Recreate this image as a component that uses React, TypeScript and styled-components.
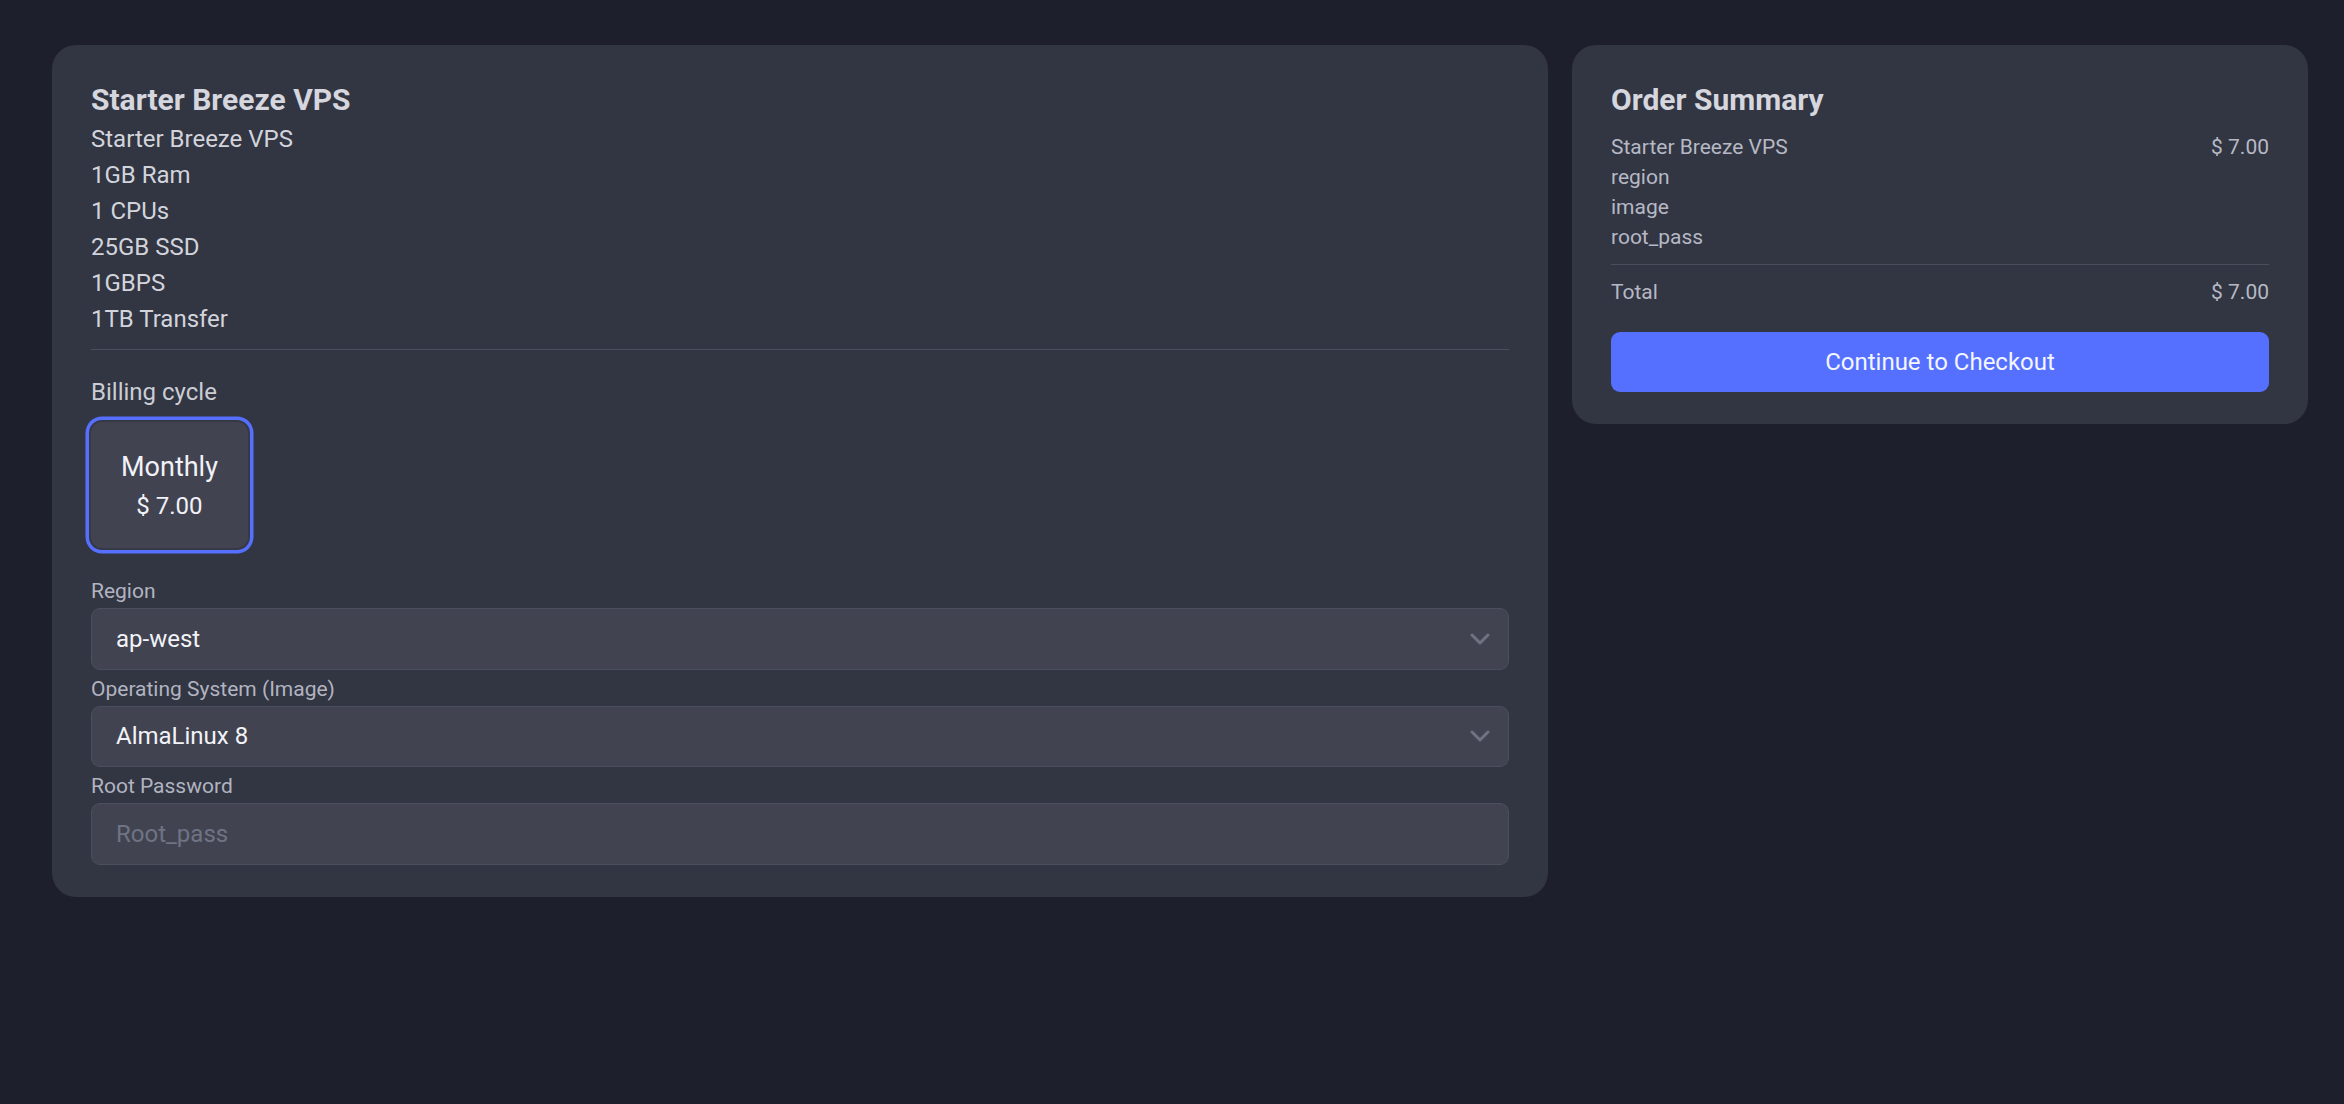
import React from "react";
import styled, { createGlobalStyle } from "styled-components";

const GlobalStyle = createGlobalStyle`
  html, body {
    margin: 0;
    padding: 0;
    background: #1e1f2c;
    font-family: Roboto, "Noto Sans", "Liberation Sans", sans-serif;
  }
  * { box-sizing: border-box; }
`;

const Page = styled.main`
  min-height: 1104px;
  padding: 45px 36px 0 52px;
  display: grid;
  grid-template-columns: repeat(3, 1fr);
  gap: 24px;
  align-items: start;
`;

const Card = styled.section<{ $span?: number }>`
  grid-column: span ${(p) => p.$span ?? 1};
  background: #323542;
  border-radius: 24px;
  padding: 34px 39px 32px;
  display: flex;
  flex-direction: column;
`;

const Title = styled.h2`
  margin: 0;
  font-size: 30px;
  line-height: 42px;
  font-weight: 700;
  color: #d5d6de;
`;

const SpecList = styled.div`
  display: flex;
  flex-direction: column;
  font-size: 24px;
  line-height: 36px;
  color: #d2d4dc;
`;

const Divider = styled.hr<{ $gap?: number }>`
  margin: ${(p) => p.$gap ?? 12}px 0 0;
  border: none;
  height: 1px;
  background: #4a4d5b;
`;

const SectionLabel = styled.div`
  margin-top: 24px;
  font-size: 24px;
  line-height: 36px;
  color: #cbcdd5;
`;

const CycleRow = styled.div`
  margin-top: 12px;
  display: flex;
  gap: 16px;
`;

const CycleOption = styled.button<{ $active?: boolean }>`
  display: flex;
  flex-direction: column;
  align-items: center;
  padding: 24px 30px;
  background: #414351;
  border: none;
  border-radius: 11px;
  font-family: inherit;
  color: #f1f2f7;
  cursor: pointer;
  box-shadow: ${(p) =>
    p.$active ? "0 0 0 2px #363845, 0 0 0 5.5px #5570ff" : "none"};
`;

const CycleName = styled.span`
  font-size: 27px;
  line-height: 42px;
`;

const CyclePrice = styled.span`
  font-size: 24px;
  line-height: 36px;
`;

const Fields = styled.div`
  margin-top: 28px;
  display: flex;
  flex-direction: column;
  gap: 4px;
`;

const Field = styled.label`
  display: flex;
  flex-direction: column;
  gap: 2px;
`;

const FieldLabel = styled.span`
  font-size: 21px;
  line-height: 30px;
  color: #b1b4c0;
`;

const SelectBox = styled.div`
  height: 61.5px;
  display: flex;
  align-items: center;
  justify-content: space-between;
  padding: 0 18px 0 24px;
  background: #414351;
  border: 1px solid #4b4e5c;
  border-radius: 9px;
  font-size: 24px;
  color: #f2f3f7;
`;

const TextInput = styled.input`
  height: 61.5px;
  width: 100%;
  padding: 0 24px;
  background: #414351;
  border: 1px solid #4b4e5c;
  border-radius: 9px;
  font-family: inherit;
  font-size: 24px;
  color: #f2f3f7;
  outline: none;
  &::placeholder {
    color: #6f7383;
  }
`;

const Chevron = () => (
  <svg width="20" height="12" viewBox="0 0 20 12" fill="none">
    <polyline
      points="2,2 10,10 18,2"
      stroke="#6f7280"
      strokeWidth="3"
      strokeLinecap="round"
      strokeLinejoin="round"
    />
  </svg>
);

const SummaryList = styled.div`
  margin-top: 11px;
  display: flex;
  flex-direction: column;
`;

const SummaryRow = styled.div`
  display: flex;
  justify-content: space-between;
  font-size: 21px;
  line-height: 30px;
  color: #b6b9c5;
`;

const TotalRow = styled(SummaryRow)`
  margin-top: 12px;
`;

const CheckoutButton = styled.button`
  margin-top: 25px;
  height: 60px;
  width: 100%;
  background: #5570ff;
  border: none;
  border-radius: 9px;
  font-family: inherit;
  font-size: 24px;
  color: #f3f5ff;
  cursor: pointer;
`;

const specs = [
  "Starter Breeze VPS",
  "1GB Ram",
  "1 CPUs",
  "25GB SSD",
  "1GBPS",
  "1TB Transfer",
];

export default function App() {
  return (
    <>
      <GlobalStyle />
      <Page>
        <Card $span={2}>
          <Title>Starter Breeze VPS</Title>
          <SpecList>
            {specs.map((s) => (
              <div key={s}>{s}</div>
            ))}
          </SpecList>
          <Divider />
          <SectionLabel>Billing cycle</SectionLabel>
          <CycleRow>
            <CycleOption $active>
              <CycleName>Monthly</CycleName>
              <CyclePrice>$ 7.00</CyclePrice>
            </CycleOption>
          </CycleRow>
          <Fields>
            <Field>
              <FieldLabel>Region</FieldLabel>
              <SelectBox>
                <span>ap-west</span>
                <Chevron />
              </SelectBox>
            </Field>
            <Field>
              <FieldLabel>Operating System (Image)</FieldLabel>
              <SelectBox>
                <span>AlmaLinux 8</span>
                <Chevron />
              </SelectBox>
            </Field>
            <Field>
              <FieldLabel>Root Password</FieldLabel>
              <TextInput placeholder="Root_pass" />
            </Field>
          </Fields>
        </Card>
        <Card>
          <Title>Order Summary</Title>
          <SummaryList>
            <SummaryRow>
              <span>Starter Breeze VPS</span>
              <span>$ 7.00</span>
            </SummaryRow>
            <SummaryRow>
              <span>region</span>
            </SummaryRow>
            <SummaryRow>
              <span>image</span>
            </SummaryRow>
            <SummaryRow>
              <span>root_pass</span>
            </SummaryRow>
          </SummaryList>
          <Divider />
          <TotalRow>
            <span>Total</span>
            <span>$ 7.00</span>
          </TotalRow>
          <CheckoutButton>Continue to Checkout</CheckoutButton>
        </Card>
      </Page>
    </>
  );
}
